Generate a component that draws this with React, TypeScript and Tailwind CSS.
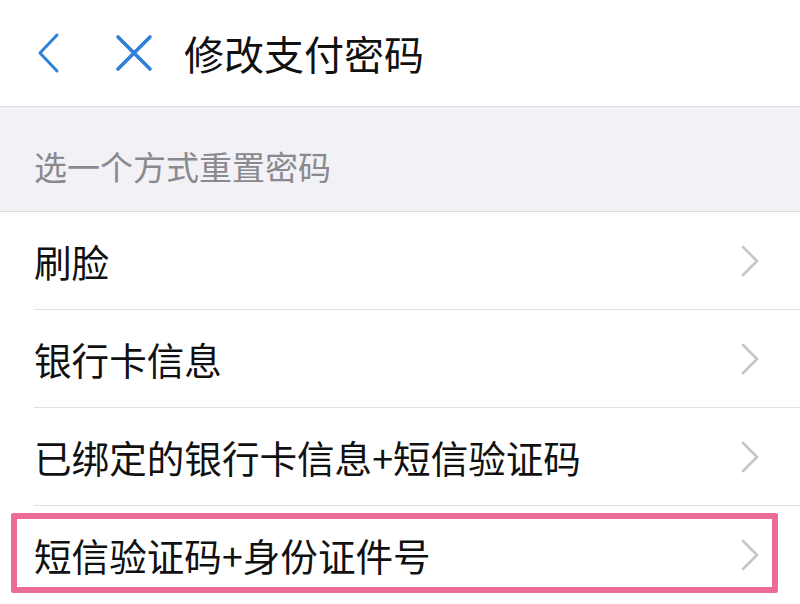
import React from 'react';

const FONT = { fontFamily: '"Noto Sans CJK SC", "Noto Sans", sans-serif' };

const options = ['刷脸', '银行卡信息', '已绑定的银行卡信息+短信验证码', '短信验证码+身份证件号'];

function Chevron() {
  return (
    <svg width="26" height="34" viewBox="0 0 26 34" fill="none" className="shrink-0">
      <path d="M7 3 L21 17 L7 31" stroke="#c5c5c8" strokeWidth="2.6" strokeLinecap="round" strokeLinejoin="round" />
    </svg>
  );
}

export default function App() {
  return (
    <div className="w-[800px] h-[604px] overflow-hidden bg-white relative text-[#111]" style={FONT}>
      {/* top bar */}
      <div className="h-[107px] flex items-center border-b border-[#dcdce0] bg-white">
        <svg width="28" height="42" viewBox="0 0 28 42" fill="none" className="ml-[35px]">
          <path d="M22 3 L5 21 L22 39" stroke="#2f80d8" strokeWidth="3" strokeLinecap="round" strokeLinejoin="round" />
        </svg>
        <svg width="38" height="38" viewBox="0 0 38 38" fill="none" className="ml-[52px]">
          <path d="M3 3 L35 35 M35 3 L3 35" stroke="#2f80d8" strokeWidth="3.6" strokeLinecap="round" />
        </svg>
        <span className="ml-[31px] text-[40px] leading-none">修改支付密码</span>
      </div>

      {/* section header */}
      <div className="h-[105px] bg-[#f1f1f6] flex items-center pl-[34px] pt-[14px] border-b border-[#dcdce0]">
        <span className="text-[33px] text-[#8a8a8e] leading-none">选一个方式重置密码</span>
      </div>

      {/* options */}
      <div className="bg-white">
        {options.map((t, i) => (
          <div key={t} className="pl-[34px]">
            <div
              className={
                'h-[98px] flex items-center justify-between pr-[38px] ' +
                (i < options.length - 1 ? 'border-b border-[#e2e2e6]' : '')
              }
            >
              <span className="text-[37.6px] leading-none">{t}</span>
              <Chevron />
            </div>
          </div>
        ))}
      </div>

      {/* highlight frame */}
      <div className="absolute left-[11px] top-[513px] w-[767px] h-[80px] border-[6px] border-[#ec6b94] rounded-[2px] pointer-events-none" />
    </div>
  );
}
